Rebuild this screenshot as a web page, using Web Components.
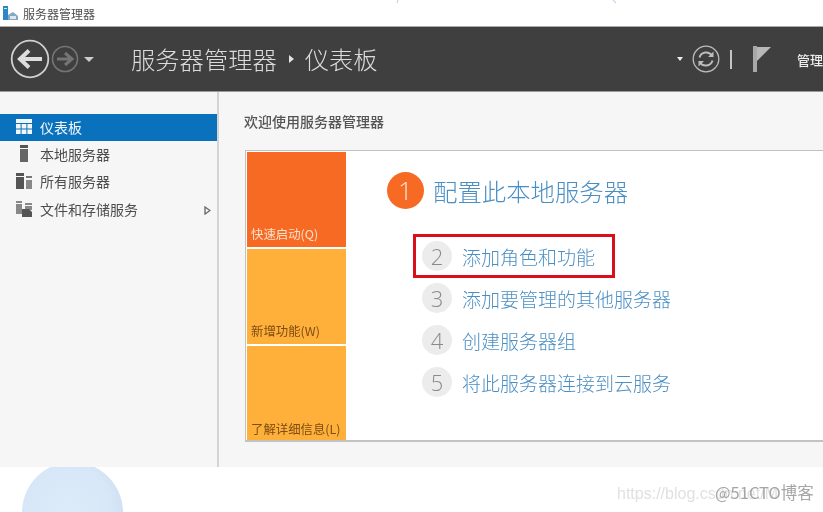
<!DOCTYPE html>
<html lang="zh">
<head>
<meta charset="utf-8">
<title>服务器管理器</title>
<style>
html, body { margin: 0; padding: 0; background: #fff; }
body { width: 823px; height: 512px; overflow: hidden; position: relative; font-family: "Noto Sans CJK SC", "Noto Sans", sans-serif; }
</style>
</head>
<body>
<sm-titlebar>服务器管理器</sm-titlebar>
<sm-header></sm-header>
<sm-main>
  <sm-sidebar slot="side">
    <sm-nav-item icon="grid" active>仪表板</sm-nav-item>
    <sm-nav-item icon="one">本地服务器</sm-nav-item>
    <sm-nav-item icon="all">所有服务器</sm-nav-item>
    <sm-nav-item icon="files" arrow>文件和存储服务</sm-nav-item>
  </sm-sidebar>
  <sm-welcome>
    <sm-step n="1" main>配置此本地服务器</sm-step>
    <sm-step n="2" marked>添加角色和功能</sm-step>
    <sm-step n="3">添加要管理的其他服务器</sm-step>
    <sm-step n="4">创建服务器组</sm-step>
    <sm-step n="5">将此服务器连接到云服务</sm-step>
  </sm-welcome>
</sm-main>
<sm-footer></sm-footer>

<script>
class SmTitlebar extends HTMLElement {
    constructor () {
        super();
        this.attachShadow({mode: 'open'}).innerHTML = `
        <style>
            :host { display: flex; align-items: center; height: 27px; box-sizing: border-box; padding: 0 0 0 3px; background: #fff; border-bottom: 1px solid #a9a9a9; color: #4d4d4d; font-size: 12px; position: relative; filter: blur(.5px); }
            svg.logo { width: 15px; height: 16px; margin-right: 5px; }
            svg.speck { position: absolute; top: 0; width: 6px; height: 4px; }
        </style>
        <svg class="logo" viewBox="0 0 15 16">
            <rect x="0" y="1" width="5" height="14" fill="#2f86c5"/>
            <rect x="1" y="3" width="3" height="1" fill="#cfe6f5"/>
            <path d="M5 10 L10 7 L15 11 V15 H5 Z" fill="#7fa9c4"/>
            <rect x="7" y="11" width="6" height="3" fill="#dbe8f0"/>
        </svg>
        <slot></slot>
        <svg class="speck" style="left: 395px" viewBox="0 0 6 4"><path d="M3 0 L2 3" stroke="#c4d8ee" stroke-width="1.2"/></svg>
        <svg class="speck" style="left: 612px" viewBox="0 0 6 4"><path d="M1 0 L4 3" stroke="#c4d8ee" stroke-width="1.2"/></svg>`;
    }
}

class SmHeader extends HTMLElement {
    constructor () {
        super();
        this.attachShadow({mode: 'open'}).innerHTML = `
        <style>
            :host { display: flex; align-items: center; height: 65px; box-sizing: border-box; border-bottom: 1px solid #9a9a9a; background: #3f3f3f; color: #dcdcdc; overflow: hidden; filter: blur(.5px); }
            .back { width: 40px; height: 40px; margin-left: 10px; flex: none; }
            .fwd { width: 28px; height: 28px; margin-left: 1px; flex: none; }
            .drop { width: 0; height: 0; border: 5px solid transparent; border-top: 5px solid #ccc; border-bottom: 0; margin-left: 5px; flex: none; }
            .crumb { margin-left: 37px; font-size: 24.3px; font-weight: 300; line-height: 32px; display: flex; align-items: center; white-space: nowrap; }
            .sep { width: 0; height: 0; border: 4px solid transparent; border-left: 5px solid #e4e4e4; border-right: 0; margin: 0 11px 0 12px; }
            .tools { margin-left: auto; display: flex; align-items: center; white-space: nowrap; }
            .small { width: 0; height: 0; border: 3.5px solid transparent; border-top: 4px solid #eee; border-bottom: 0; margin-right: 9px; }
            .sync { width: 28px; height: 28px; margin-right: 10px; }
            .bar { width: 2px; height: 19px; background: #c4c4c4; margin-right: 21px; }
            .flag { width: 18px; height: 26px; margin-right: 26px; }
            .manage { font-size: 13px; font-weight: 500; color: #eee; }
        </style>
        <svg class="back" viewBox="0 0 40 40" fill="none" stroke="#d0d0d0">
            <circle cx="20" cy="20" r="18.3" stroke-width="1.8"/>
            <path d="M32 20 H11 M19 11.5 L10 20 L19 28.5" stroke-width="4" stroke="#dedede"/>
        </svg>
        <svg class="fwd" viewBox="0 0 28 28" fill="none" stroke="#747474">
            <circle cx="14" cy="14" r="12.5" stroke-width="1.6"/>
            <path d="M6 14 H20 M14 8 L21 14 L14 20" stroke-width="3"/>
        </svg>
        <span class="drop"></span>
        <div class="crumb"><span>服务器管理器</span><span class="sep"></span><span>仪表板</span></div>
        <div class="tools">
            <span class="small"></span>
            <svg class="sync" viewBox="0 0 28 28" fill="none" stroke="#bdbdbd">
                <circle cx="14" cy="14" r="12.8" stroke-width="1.3"/>
                <path d="M7.5 12.5 A7 7 0 0 1 20 10.5 M20.5 15.5 A7 7 0 0 1 8 17.5" stroke-width="2"/>
                <path d="M21.5 6.5 V12 H16 Z M6.5 21.5 V16 H12 Z" fill="#bdbdbd" stroke="none"/>
            </svg>
            <span class="bar"></span>
            <svg class="flag" viewBox="0 0 18 26">
                <rect x="0" y="0" width="4" height="26" fill="#a8a8a8"/>
                <path d="M4 1 H18 L4 15 Z" fill="#b8b8b8"/>
            </svg>
            <span class="manage">管理</span>
        </div>`;
    }
}

class SmMain extends HTMLElement {
    constructor () {
        super();
        this.attachShadow({mode: 'open'}).innerHTML = `
        <style>
            :host { display: flex; height: 375px; background: #f6f6f6; }
            .side { display: block; width: 219px; flex: none; box-sizing: border-box; border-right: 2px solid #d4d4d4; padding-top: 22px; }
            .body { flex: 1; min-width: 0; }
        </style>
        <div class="side"><slot name="side"></slot></div>
        <div class="body"><slot></slot></div>`;
    }
}

class SmSidebar extends HTMLElement {
    constructor () {
        super();
        this.attachShadow({mode: 'open'}).innerHTML = `
        <style>:host { display: flex; flex-direction: column; }</style>
        <slot></slot>`;
    }
}

const NAV_ICONS = {
    grid: `<rect x="0" y="0" width="16" height="4" fill="currentColor"/>
           <path d="M0 5h4.6v4.5H0zM5.6 5h4.8v4.5H5.6zM11.4 5H16v4.5h-4.6zM0 10.5h4.6V15H0zM5.6 10.5h4.8V15H5.6zM11.4 10.5H16V15h-4.6z" fill="currentColor"/>`,
    one: `<rect x="4" y="-1" width="8" height="3" fill="#555"/><rect x="4" y="3" width="8" height="13" fill="#666"/>`,
    all: `<rect x="0" y="0" width="8" height="3" fill="#555"/><rect x="0" y="4" width="8" height="12" fill="#555"/>
          <rect x="10" y="3" width="6" height="2" fill="#777"/><rect x="10" y="7" width="6" height="9" fill="#888"/>`,
    files: `<rect x="0" y="0" width="6" height="2" fill="#888"/><rect x="0" y="3" width="6" height="10" fill="#888"/>
            <rect x="9" y="2" width="7" height="2" fill="#888"/><rect x="9" y="5" width="7" height="4" fill="#888"/>
            <path d="M6 8h7l3 3v5H6z" fill="#555"/>`
};

class SmNavItem extends HTMLElement {
    constructor () {
        super();
        let icon = this.getAttribute("icon");
        this.attachShadow({mode: 'open'}).innerHTML = `
        <style>
            :host { display: flex; align-items: center; height: 27.4px; box-sizing: border-box; padding: 0 0 2px 16px; color: #4d4d4d; font-size: 14px; position: relative; filter: blur(.45px); }
            :host([active]) { background: #0a72bd; color: #f0f6fb; }
            svg.i { width: 16px; height: 16px; margin-right: 8px; flex: none; overflow: visible; }
            svg.arrow { position: absolute; right: 6px; top: 10px; width: 7px; height: 9px; }
        </style>
        <svg class="i" viewBox="0 0 16 16">${NAV_ICONS[icon]}</svg>
        <slot></slot>
        ${this.hasAttribute("arrow") ? '<svg class="arrow" viewBox="0 0 7 9"><path d="M1 1 L6 4.5 L1 8 Z" fill="none" stroke="#666" stroke-width="1.3"/></svg>' : ''}`;
    }
}

class SmWelcome extends HTMLElement {
    constructor () {
        super();
        this.attachShadow({mode: 'open'}).innerHTML = `
        <style>
            :host { display: block; padding: 19px 0 0 26px; }
            h2 { margin: 0 0 19px -1px; font-size: 14px; font-weight: 500; line-height: 20px; color: #555; filter: blur(.45px); }
            .card { display: flex; height: 292px; box-sizing: border-box; border: 1px solid #c2c2c2; border-right: 0; border-bottom-width: 2px; background: #fff; padding: 1px 0 0 1px; }
            .tiles { width: 99px; flex: none; display: grid; grid-template-rows: 95px 95px 94px; gap: 2px; filter: blur(.4px); }
            .tile { display: flex; align-items: flex-end; padding: 0 0 4px 4px; font-size: 12.4px; line-height: 17px; color: #7d4d12; background: #ffb03b; white-space: nowrap; }
            .tile.hot { background: #f76a24; color: #fde0cc; }
            .tile.last { padding-bottom: 2px; }
            .steps { flex: 1; display: flex; flex-direction: column; padding: 19px 0 0 41px; }
        </style>
        <h2>欢迎使用服务器管理器</h2>
        <div class="card">
            <div class="tiles">
                <div class="tile hot">快速启动(Q)</div>
                <div class="tile">新增功能(W)</div>
                <div class="tile last">了解详细信息(L)</div>
            </div>
            <div class="steps"><slot></slot></div>
        </div>`;
    }
}

class SmStep extends HTMLElement {
    constructor () {
        super();
        let n = this.getAttribute("n");
        this.attachShadow({mode: 'open'}).innerHTML = `
        <style>
            :host { display: flex; align-items: center; height: 42px; margin-left: 35px; color: #4a8fc4; font-size: 19px; font-weight: 300; position: relative; }
            .n { width: 30px; height: 30px; border-radius: 50%; background: #ececec; color: #8a8a8a; font: 300 22px/30px "Open Sans", sans-serif; text-align: center; margin-right: 10px; flex: none; filter: blur(.45px); }
            .t { filter: blur(.45px); white-space: nowrap; }
            :host([main]) { height: 38px; margin: 0 0 26px; font-size: 24.4px; }
            :host([main]) .n { width: 37px; height: 37px; background: #f76a24; color: #fde4d4; font-size: 26px; line-height: 37px; margin-right: 9px; }
            .mark { position: absolute; left: -9px; top: -1px; width: 202px; height: 44px; box-sizing: border-box; border: 3px solid #d9101c; }
        </style>
        <span class="n">${n}</span><span class="t"><slot></slot></span>
        ${this.hasAttribute("marked") ? '<span class="mark"></span>' : ''}`;
    }
}

class SmFooter extends HTMLElement {
    constructor () {
        super();
        this.attachShadow({mode: 'open'}).innerHTML = `
        <style>
            :host { display: block; height: 45px; position: relative; overflow: hidden; background: #fff; }
            .ball { position: absolute; left: 22px; top: -5px; width: 101px; height: 101px; border-radius: 50%; background: radial-gradient(circle at 45% 45%, #dcebf9 0%, #d7e7f7 55%, #bfd5ec 100%); filter: blur(.4px); }
            .url { position: absolute; left: 617px; top: 16px; font: 16px/22px "Liberation Sans", sans-serif; color: #e1e1e1; white-space: nowrap; filter: blur(.4px); }
            .mark { position: absolute; left: 715px; top: 13px; font: 16.5px/24px "Noto Sans CJK SC", sans-serif; color: #a6a6a6; white-space: nowrap; filter: blur(.6px); }
        </style>
        <div class="ball"></div>
        <span class="url">https://blog.csdn.net/M</span>
        <span class="mark">@51CTO博客</span>`;
    }
}

customElements.define('sm-titlebar', SmTitlebar);
customElements.define('sm-header', SmHeader);
customElements.define('sm-main', SmMain);
customElements.define('sm-sidebar', SmSidebar);
customElements.define('sm-nav-item', SmNavItem);
customElements.define('sm-welcome', SmWelcome);
customElements.define('sm-step', SmStep);
customElements.define('sm-footer', SmFooter);
</script>
</body>
</html>
